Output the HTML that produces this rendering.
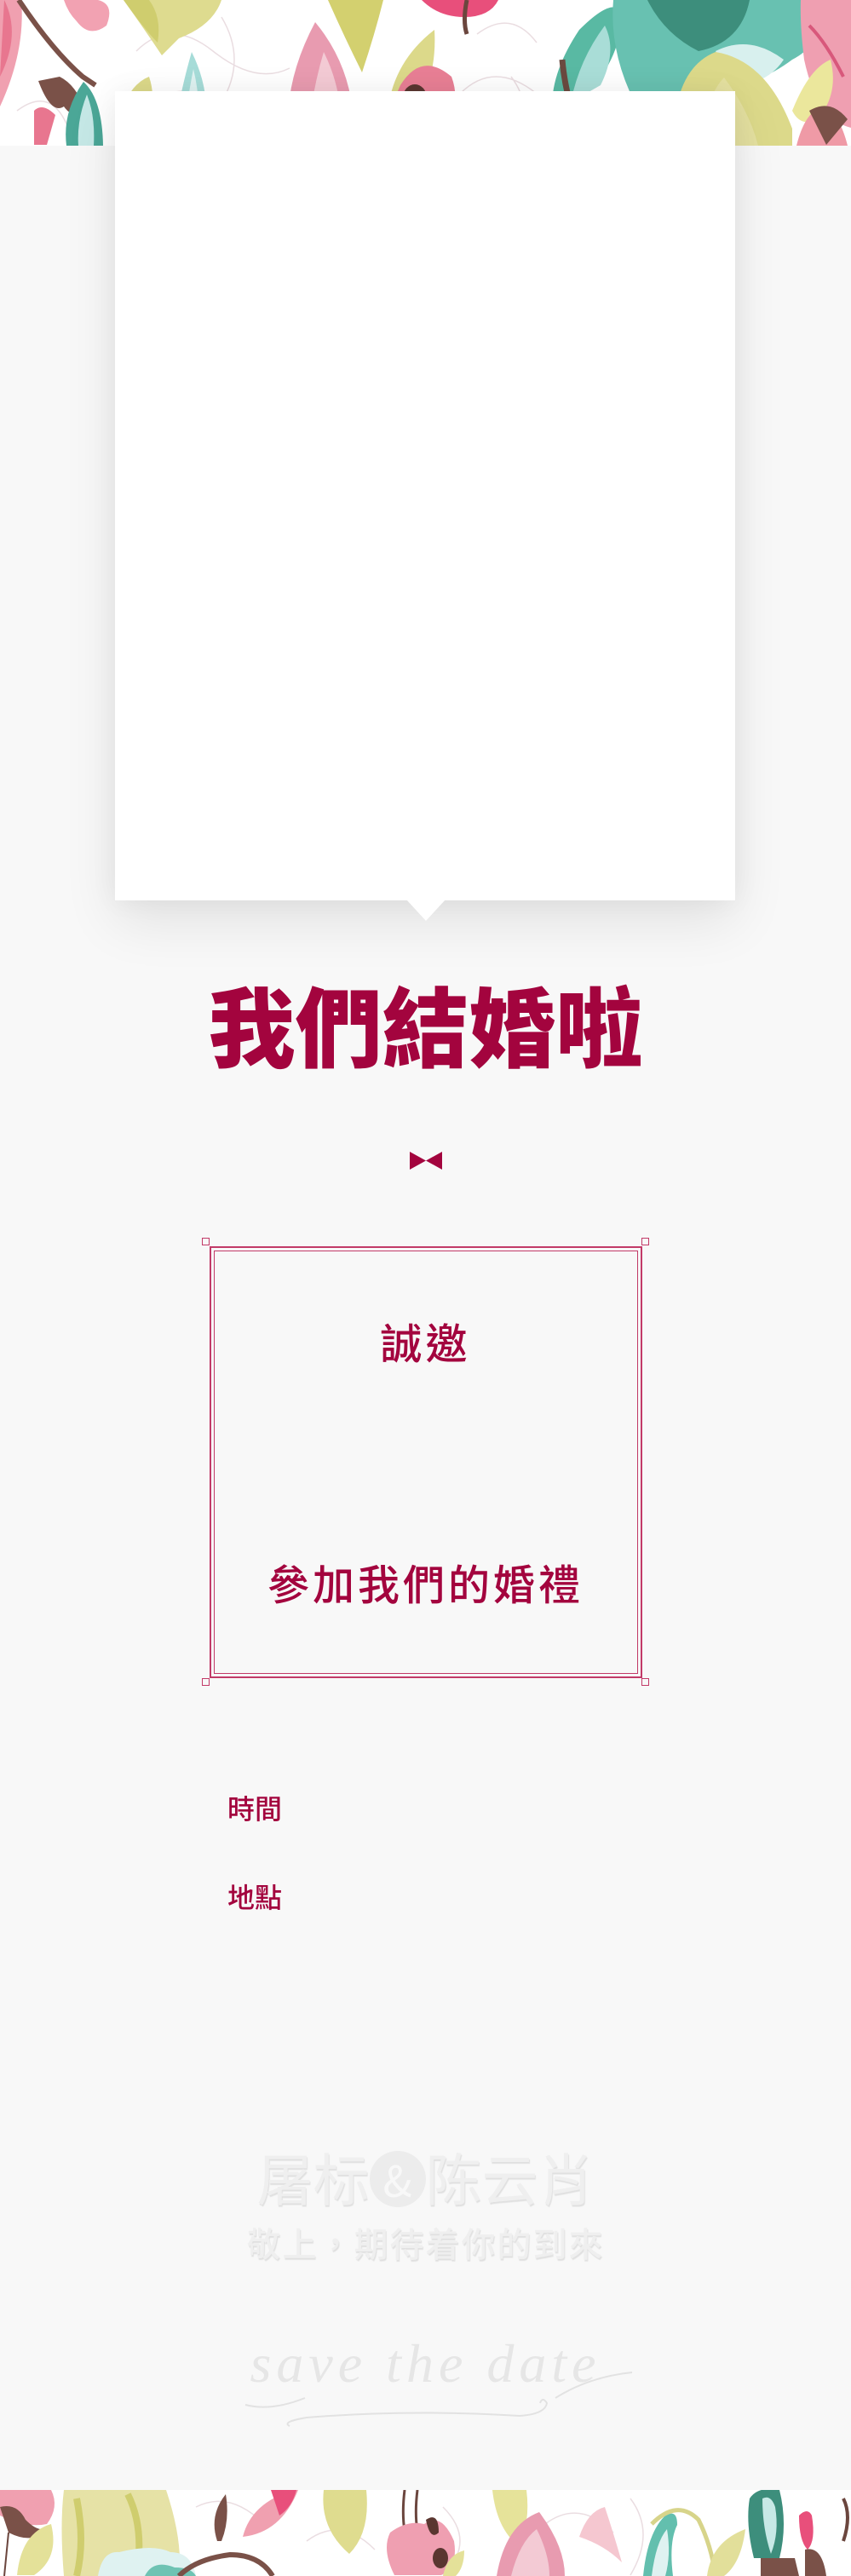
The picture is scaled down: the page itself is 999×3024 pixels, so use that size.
<!DOCTYPE html>
<html><head><meta charset="utf-8"><style>
*{margin:0;padding:0;box-sizing:border-box}
body{width:999px;height:3024px;background:#f8f8f8;position:relative;overflow:hidden;font-family:"Liberation Sans","Noto Sans CJK TC",sans-serif}
.abs{position:absolute}
.banner{left:0;width:999px;background:#fff;overflow:hidden}
.card{left:135px;top:107px;width:728px;height:950px;background:#fff;box-shadow:0 25px 60px rgba(0,0,0,0.09),0 0 30px rgba(0,0,0,0.05)}
.tri{left:477px;top:1056px;width:0;height:0;border-left:23px solid transparent;border-right:23px solid transparent;border-top:25px solid #fff}
.red{color:#a3043e}
.title{left:0;width:999px;top:1142px;text-align:center;font-family:"Noto Sans CJK TC",sans-serif;font-weight:900;font-size:102px;line-height:120px;letter-spacing:0px}
.sq{width:9px;height:9px;border:1px solid #c23a68;background:#f8f8f8}
.c{text-align:center;left:0;width:999px;font-family:"Noto Sans CJK TC",sans-serif}
</style></head><body>

<div class="abs banner" style="top:0;height:171px">
<svg width="999" height="171" viewBox="0 0 999 171">
<g fill="none" stroke="#eadde1" stroke-width="1.5">
<path d="M160 60 q40 -40 90 0 t90 20 M180 120 q40 -30 80 10 M560 40 q40 -30 70 10 M540 110 q40 -40 90 0 M260 20 q30 50 0 100 M600 90 q30 40 0 80 M840 30 q30 60 -10 130 M20 130 q40 -30 60 20"/>
</g>
<path d="M0 0 h25 q5 60 -25 125 z" fill="#f0a0b0"/>
<path d="M5 0 q20 40 -5 90" fill="#e8768f"/>
<path d="M22 0 q40 60 75 90 l15 10" stroke="#7a5148" stroke-width="6" fill="none"/>
<path d="M70 90 q20 10 30 40 q-15 10 -25 -5 q-15 10 -30 -30z" fill="#7a5148"/>
<path d="M40 130 q10 -10 25 5 l-10 35 h-15 z" fill="#e8768f"/>
<path d="M78 171 q-5 -40 20 -75 q22 20 23 75 z" fill="#4ba797"/>
<path d="M92 171 q-2 -30 10 -60 q10 25 8 60z" fill="#c5e8e6"/>
<path d="M75 0 h40 q20 5 10 30 q-20 15 -35 -5 q-10 -10 -15 -25z" fill="#f2a2b2"/>
<path d="M145 0 h115 q-10 30 -50 45 l-20 20 q-20 -30 -45 -65z" fill="#dedb8f"/>
<path d="M145 0 q25 35 40 50 q5 -30 -10 -50z" fill="#cfcd6e"/>
<path d="M140 140 q10 -40 35 -50 q10 30 -5 55 q-15 5 -30 -5z" fill="#dcd98a"/>
<path d="M205 171 q0 -40 20 -110 q25 50 15 110z" fill="#a6dcd8"/>
<path d="M215 171 q2 -40 12 -90 q10 40 5 90z" fill="#dff2f1"/>
<path d="M340 171 q-10 -70 30 -145 q50 60 45 145z" fill="#e89bb0"/>
<path d="M360 171 q5 -60 20 -110 q25 50 20 110z" fill="#f3cad4"/>
<path d="M385 0 h65 q-10 40 -25 85 q-20 -40 -40 -85z" fill="#d3d06f"/>
<path d="M455 175 q-10 -90 55 -140 q5 80 -55 140z" fill="#dcd98a"/>
<path d="M470 100 q25 -40 60 -10 q15 40 -20 80 h-40 q-15 -40 0 -70z" fill="#e87f95"/>
<ellipse cx="487" cy="115" rx="14" ry="16" fill="#5a3630"/>
<path d="M495 0 h90 q-10 20 -40 20 q-30 0 -50 -20z" fill="#e84f7b"/>
<path d="M548 0 q-5 25 0 40" stroke="#6b463e" stroke-width="5" fill="none"/>
<path d="M650 145 q-10 -50 30 -110 q40 -40 50 -20 q0 50 -40 95 q-25 30 -40 35z" fill="#59b9a3"/>
<path d="M670 120 q10 -50 40 -90 q15 30 -5 70z" fill="#a9ddd7"/>
<path d="M660 70 q5 60 40 135 M700 200 q60 -20 95 -60" stroke="#6b4a40" stroke-width="7" fill="none"/>
<path d="M720 0 h240 q10 50 -30 70 q-40 30 -80 30 l-25 80 q-60 -10 -80 -60 q-30 -60 -25 -120z" fill="#68c1b1"/>
<path d="M760 0 h120 q-10 50 -60 60 q-40 -20 -60 -60z" fill="#3d8e7c"/>
<path d="M840 60 q40 -20 80 10 q-20 30 -60 30z" fill="#d8f0ee"/>
<path d="M790 171 q0 -90 50 -110 q60 10 90 90 l0 20z" fill="#dcd98a"/>
<path d="M820 171 q10 -60 30 -80 q30 40 40 80z" fill="#e4e0a0"/>
<path d="M940 0 h59 v150 q-40 -10 -55 -80 q-5 -40 -4 -70z" fill="#ef9fb1"/>
<path d="M950 30 q20 20 40 60" stroke="#d8587b" stroke-width="4" fill="none"/>
<path d="M930 130 q20 -50 45 -60 q10 40 -15 70 q-20 10 -30 -10z" fill="#ebe79c"/>
<path d="M935 171 q10 -40 30 -45 q20 5 30 45z" fill="#ef9aa6"/>
<path d="M950 130 q25 -15 45 10 l-25 30z" fill="#7a5148"/>
</svg>
</div>

<div class="abs card"></div>
<div class="abs tri"></div>

<div class="abs title red">我們結婚啦</div>

<svg class="abs" style="left:481px;top:1352px" width="38" height="21" viewBox="0 0 38 21"><path d="M0 0 L19 10.5 L38 0 V21 L19 10.5 L0 21 Z" fill="#a3043e"/></svg>

<div class="abs" style="left:246px;top:1463px;width:508px;height:507px;border:2px solid #c23a68"></div>
<div class="abs" style="left:251px;top:1468px;width:498px;height:497px;border:1px solid #c23a68"></div>
<div class="abs sq" style="left:237px;top:1453px"></div>
<div class="abs sq" style="left:753px;top:1453px"></div>
<div class="abs sq" style="left:237px;top:1970px"></div>
<div class="abs sq" style="left:753px;top:1970px"></div>

<div class="abs c red" style="top:1540px;font-size:49px;line-height:70px;letter-spacing:4px;font-weight:500">誠邀</div>
<div class="abs c red" style="top:1823px;font-size:49px;line-height:70px;letter-spacing:4px;font-weight:500">參加我們的婚禮</div>

<div class="abs red" style="left:267px;top:2102px;font-size:32px;line-height:40px;font-family:'Noto Sans CJK TC',sans-serif;font-weight:500">時間</div>
<div class="abs red" style="left:267px;top:2206px;font-size:32px;line-height:40px;font-family:'Noto Sans CJK TC',sans-serif;font-weight:500">地點</div>

<div class="abs c" style="top:2510px;font-size:66px;line-height:90px;color:#efefef;text-shadow:1px 2px 1px #e0e0e0">屠标<span style="display:inline-block;width:66px;height:66px;border-radius:50%;background:#ececec;color:#f8f8f8;font-size:50px;line-height:66px;vertical-align:4px;text-shadow:none">&amp;</span>陈云肖</div>
<div class="abs c" style="top:2604px;font-size:40px;line-height:56px;letter-spacing:2px;color:#efefef;text-shadow:1px 2px 1px #e0e0e0;font-weight:500">敬上，期待着你的到來</div>

<div class="abs c" style="top:2730px;font-family:'Liberation Serif',serif;font-style:italic;font-size:64px;line-height:90px;color:#e6e6e6;letter-spacing:6px">save the date</div>
<svg class="abs" style="left:280px;top:2760px" width="470" height="100" viewBox="0 0 470 100">
<path d="M8 63 q30 8 70 -8 M372 55 q40 -25 90 -30" stroke="#e2e2e2" stroke-width="2" fill="none"/>
<path d="M60 88 q-10 -5 20 -10 q120 -10 250 -2 q30 -2 32 -15 q-5 -8 -8 0" stroke="#e2e2e2" stroke-width="2" fill="none"/>
</svg>

<div class="abs banner" style="top:2923px;height:101px">
<svg width="999" height="101" viewBox="0 0 999 101">
<g fill="none" stroke="#eadde1" stroke-width="1.5">
<path d="M230 20 q40 -20 80 20 M360 60 q40 -30 80 10 M520 20 q40 40 0 80 M640 40 q40 -30 80 10 M740 10 q30 40 0 90"/>
</g>
<path d="M0 0 h60 q10 20 -5 40 q-25 5 -55 -10z" fill="#f0a0b0"/>
<path d="M0 20 q20 -5 30 15 q15 15 25 10 q-15 20 -45 5 z" fill="#7a5148"/>
<path d="M10 50 l-5 51" stroke="#6b463e" stroke-width="2"/>
<path d="M20 100 q5 -50 40 -60 q10 40 -20 60z" fill="#e4e199"/>
<path d="M75 0 h120 q20 60 15 101 h-135 q-5 -60 0 -101z" fill="#e6e2a6"/>
<path d="M90 10 q10 50 0 91 M150 5 q20 40 10 96" stroke="#cfcd6e" stroke-width="8" fill="none"/>
<path d="M115 101 q5 -30 25 -28 q40 -10 60 0 q25 0 30 28z" fill="#dff2f1"/>
<path d="M170 101 q10 -20 35 -10 q20 0 25 10z" fill="#6ec3b3"/>
<path d="M210 101 q20 -20 60 -25 q35 0 50 25" stroke="#7a5148" stroke-width="6" fill="none"/>
<path d="M255 60 q-10 -30 10 -55 q5 30 -5 55z" fill="#7a5148"/>
<path d="M285 55 q10 -40 60 -55 h5 q-20 50 -65 55z" fill="#f0a0b0"/>
<path d="M318 0 h30 q-5 20 -20 30z" fill="#e84f7b"/>
<path d="M380 0 h50 q5 50 -20 75 q-35 -30 -30 -75z" fill="#dfdc8f"/>
<path d="M475 0 q-5 40 5 70 M490 0 q-5 40 5 70" stroke="#6b463e" stroke-width="3" fill="none"/>
<path d="M458 50 q20 -15 40 -10 q20 -15 35 20 q5 30 -15 40 h-55 q-15 -30 -5 -50z" fill="#ef9fb1"/>
<ellipse cx="517" cy="80" rx="9" ry="12" fill="#5a3630"/>
<path d="M500 35 q15 -10 15 15 q-10 10 -15 -15z" fill="#5a3630"/>
<path d="M520 101 q5 -25 25 -30 q0 20 -10 30z" fill="#e4e199"/>
<path d="M578 0 h40 q5 40 -10 65 q-25 -20 -30 -65z" fill="#e6e39a"/>
<path d="M583 101 q10 -60 50 -75 q30 40 30 75z" fill="#e89bb0"/>
<path d="M600 101 q10 -40 30 -55 q15 30 15 55z" fill="#f3cad4"/>
<path d="M680 55 q10 -30 30 -35 q10 30 20 65 q-20 -20 -50 -30z" fill="#f5c7d0"/>
<path d="M755 101 q5 -50 25 -70 q15 -10 15 10 q-10 20 -5 60z" fill="#63bfae"/>
<path d="M765 101 q5 -40 18 -55 q5 30 -2 55z" fill="#dff2f1"/>
<path d="M765 40 q30 -30 55 -5 q15 30 20 66" stroke="#d7d48a" stroke-width="5" fill="none"/>
<path d="M830 101 q5 -40 45 -55 q-5 40 -25 55z" fill="#e2df9a"/>
<path d="M880 10 q10 -15 35 -10 q10 40 0 80 h-30 q-10 -40 -5 -70z" fill="#3d8e7c"/>
<path d="M895 10 q10 -5 15 10 q5 30 -5 55 q-10 -30 -10 -65z" fill="#c7e9e6"/>
<path d="M893 80 h40 l5 21 h-45z" fill="#7a5148"/>
<path d="M938 30 q10 -10 15 0 q5 30 -5 40 q-10 -10 -10 -40z" fill="#e84f7b"/>
<path d="M945 70 q20 -5 25 31 h-25z" fill="#7a5148"/>
<path d="M990 10 q10 20 0 50" stroke="#6b463e" stroke-width="4" fill="none"/>
</svg>
</div>
</body></html>
